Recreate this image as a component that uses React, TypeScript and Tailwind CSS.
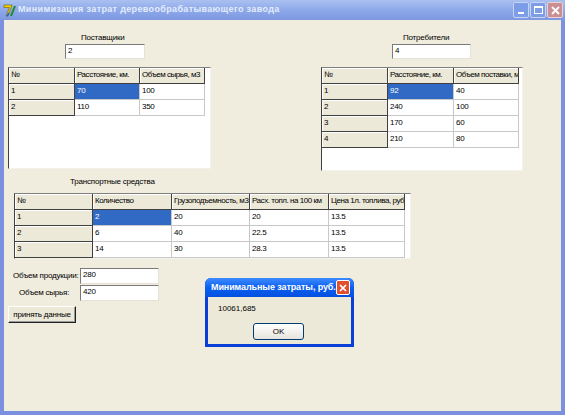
import React from "react";

type Col = { w: number; title: string };

const fixedCell =
  "bg-[#ece9d8] border-r border-b border-[#404040] shadow-[inset_1px_1px_0_#ffffff]";
const plainCell = "bg-white border-r border-b border-[#c8c8c8]";

const Grid = ({
  cols,
  rows,
  width,
  height,
}: {
  cols: Col[];
  rows: string[][];
  width: number;
  height: number;
}) => {
  return (
    <div
      className="bg-white border border-l-[#404040] border-t-[#808080] border-r-[#f4f2e8] border-b-[#f4f2e8] overflow-hidden"
      style={{ width, height }}
    >
      <div className="flex">
        {cols.map((c) => (
          <div
            key={c.title}
            className={`${fixedCell} h-[16px] shrink-0 pl-[2px] text-[8px] leading-[13px] tracking-[-0.45px] whitespace-nowrap overflow-hidden`}
            style={{ width: c.w }}
          >
            {c.title}
          </div>
        ))}
      </div>
      {rows.map((r, i) => (
        <div key={i} className="flex">
          {r.map((v, j) => (
            <div
              key={j}
              className={`h-[16px] shrink-0 pl-[2px] text-[8px] leading-[13px] tracking-[-0.3px] whitespace-nowrap overflow-hidden ${
                j === 0
                  ? fixedCell
                  : i === 0 && j === 1
                  ? "bg-[#316ac5] text-white border-r border-b border-[#c8c8c8]"
                  : plainCell
              }`}
              style={{ width: cols[j].w }}
            >
              {v}
            </div>
          ))}
        </div>
      ))}
    </div>
  );
};

const Field = ({ value, w, h = 15 }: { value: string; w: number; h?: number }) => (
  <div
    className="bg-white border border-t-[#7a7a7a] border-l-[#7a7a7a] border-r-[#e4e2d8] border-b-[#e4e2d8] pl-[2px] text-[8px] leading-[12px]"
    style={{ width: w, height: h }}
  >
    {value}
  </div>
);

const App = () => {
  return (
    <div className="relative w-[565px] h-[415px] bg-[#7b90df] flex flex-col font-['Liberation_Sans',Arial,sans-serif] text-black overflow-hidden">
      {/* title bar (inactive) */}
      <div className="h-[20px] flex items-center bg-gradient-to-b from-[#a9c0f0] via-[#8ea9ea] to-[#7d97e0] pl-[3px] pr-[2px]">
        <svg width="13" height="13" viewBox="0 0 13 13" className="shrink-0">
          <path d="M1 1h8l-4 11H3l3.5-8.5H1z" fill="#f2d500" stroke="#6b5a00" strokeWidth="0.6" />
          <path d="M8 12 12 2" stroke="#1e8a2e" strokeWidth="2" />
          <path d="M4 12l2-3" stroke="#1d5fcf" strokeWidth="1.4" />
        </svg>
        <span className="ml-[2px] text-[9px] font-bold text-[#e4ecfb] tracking-[0.35px] whitespace-nowrap">
          Минимизация затрат деревообрабатывающего завода
        </span>
        <div className="ml-auto flex gap-[1px]">
          <div className="w-[16px] h-[16px] rounded-[2px] border border-[#c6d4f5] bg-[#7d9de6] flex items-end justify-center pb-[3px]">
            <div className="w-[6px] h-[2px] bg-white" />
          </div>
          <div className="w-[16px] h-[16px] rounded-[2px] border border-[#c6d4f5] bg-[#7d9de6] flex items-center justify-center">
            <div className="w-[9px] h-[8px] border border-white border-t-2" />
          </div>
          <div className="w-[16px] h-[16px] rounded-[2px] border border-[#eed0d0] bg-[#c98f94] flex items-center justify-center">
            <svg width="9" height="9" viewBox="0 0 9 9">
              <path d="M1 1l7 7M8 1 1 8" stroke="#fff" strokeWidth="1.8" />
            </svg>
          </div>
        </div>
      </div>

      {/* client area */}
      <div className="flex-1 mx-[4px] mb-[4px] bg-[#f0ecde] flex flex-col text-[8px] leading-[12px] tracking-[-0.2px]">
        <div className="flex justify-between pt-[12px] pr-[38px] items-start">
          <div className="ml-[4px] flex flex-col">
            <div className="ml-[73px]">Поставщики</div>
            <div className="ml-[57px]">
              <Field value="2" w={80} />
            </div>
            <div className="mt-[8px]">
              <Grid
                width={203}
                height={102}
                cols={[
                  { w: 66, title: "№" },
                  { w: 65, title: "Расстояние, км." },
                  { w: 65, title: "Объем сырья, м3" },
                ]}
                rows={[
                  ["1", "70", "100"],
                  ["2", "110", "350"],
                ]}
              />
            </div>
          </div>
          <div className="flex flex-col">
            <div className="ml-[82px]">Потребители</div>
            <div className="ml-[71px]">
              <Field value="4" w={79} />
            </div>
            <div className="mt-[8px]">
              <Grid
                width={202}
                height={104}
                cols={[
                  { w: 66, title: "№" },
                  { w: 66, title: "Расстояние, км." },
                  { w: 65, title: "Объем поставки, м3" },
                ]}
                rows={[
                  ["1", "92", "40"],
                  ["2", "240", "100"],
                  ["3", "170", "60"],
                  ["4", "210", "80"],
                ]}
              />
            </div>
          </div>
        </div>

        <div className="mt-[5px] ml-[66px]">Транспортные средства</div>
        <div className="mt-[5px] ml-[10px]">
          <Grid
            width={397}
            height={66}
            cols={[
              { w: 78, title: "№" },
              { w: 79, title: "Количество" },
              { w: 78, title: "Грузоподъемность, м3" },
              { w: 79, title: "Расх. топл. на 100 км" },
              { w: 76, title: "Цена 1л. топлива, руб." },
            ]}
            rows={[
              ["1", "2", "20", "20", "13.5"],
              ["2", "6", "40", "22.5", "13.5"],
              ["3", "14", "30", "28.3", "13.5"],
            ]}
          />
        </div>

        <div className="mt-[9px] flex items-center">
          <div className="w-[76px] pl-[9px] whitespace-nowrap">Объем продукции:</div>
          <Field value="280" w={79} h={16} />
        </div>
        <div className="mt-[1px] flex items-center">
          <div className="w-[76px] pl-[15px] whitespace-nowrap">Объем сырья:</div>
          <Field value="420" w={79} h={16} />
        </div>
        <div className="mt-[5px] ml-[4px] w-[68px] h-[17px] bg-[#ece9d8] border border-t-white border-l-white border-r-[#202020] border-b-[#202020] shadow-[inset_-1px_-1px_0_#9a9a9a] flex items-center justify-center whitespace-nowrap">
          принять данные
        </div>
      </div>

      {/* message dialog */}
      <div className="absolute left-[205px] top-[278px] w-[149px] h-[69px] bg-[#0a3fd8] rounded-t-[6px] p-[3px] pt-0 flex flex-col">
        <div className="h-[19px] -mx-[3px] pl-[6px] pr-[4px] rounded-t-[6px] bg-gradient-to-b from-[#3d8bff] via-[#0a5ff0] to-[#0550e0] flex items-center">
          <span className="text-[9px] font-bold text-white whitespace-nowrap tracking-[-0.1px]">
            Минимальные затраты, руб.
          </span>
          <div className="ml-auto w-[15px] h-[15px] rounded-[2px] border border-white bg-[#e0502e] flex items-center justify-center">
            <svg width="8" height="8" viewBox="0 0 8 8">
              <path d="M1 1l6 6M7 1 1 7" stroke="#fff" strokeWidth="1.7" />
            </svg>
          </div>
        </div>
        <div className="flex-1 bg-[#ece9d8] flex flex-col">
          <div className="mt-[6px] ml-[10px] text-[8px] leading-[12px]">10061,685</div>
          <div className="mt-[8px] ml-[45px] w-[51px] h-[17px] rounded-[3px] border border-[#003c74] bg-gradient-to-b from-white to-[#e6e4dc] flex items-center justify-center text-[8px]">
            OK
          </div>
        </div>
      </div>
    </div>
  );
};

export default App;
